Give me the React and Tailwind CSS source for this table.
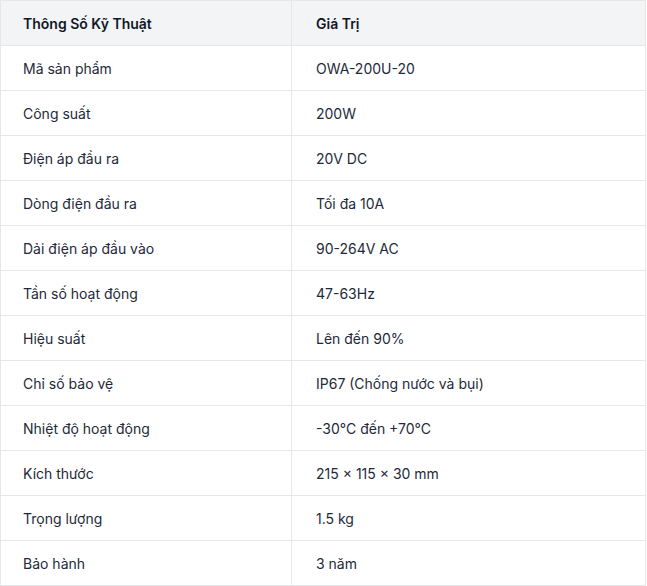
import React from "react";

const rows = [
  ["Mã sản phẩm", "OWA-200U-20"],
  ["Công suất", "200W"],
  ["Điện áp đầu ra", "20V DC"],
  ["Dòng điện đầu ra", "Tối đa 10A"],
  ["Dải điện áp đầu vào", "90-264V AC"],
  ["Tần số hoạt động", "47-63Hz"],
  ["Hiệu suất", "Lên đến 90%"],
  ["Chỉ số bảo vệ", "IP67 (Chống nước và bụi)"],
  ["Nhiệt độ hoạt động", "-30°C đến +70°C"],
  ["Kích thước", "215 × 115 × 30 mm"],
  ["Trọng lượng", "1.5 kg"],
  ["Bảo hành", "3 năm"],
];

export default function App() {
  return (
    <div className="bg-white" style={{ fontFamily: "Inter, 'Noto Sans', sans-serif" }}>
      <table className="w-[646px] border-collapse border border-gray-200 text-sm text-gray-800">
        <thead>
          <tr className="bg-gray-100">
            <th className="w-[291px] border border-gray-200 pl-[22px] pr-6 pt-[13px] pb-[11px] text-left font-semibold text-gray-900">Thông Số Kỹ Thuật</th>
            <th className="border border-gray-200 px-6 pt-[13px] pb-[11px] text-left font-semibold text-gray-900">Giá Trị</th>
          </tr>
        </thead>
        <tbody>
          {rows.map(([a, b]) => (
            <tr key={a}>
              <td className="border border-gray-200 pl-[22px] pr-6 pt-[13px] pb-[11px]">{a}</td>
              <td className="border border-gray-200 px-6 pt-[13px] pb-[11px]">{b}</td>
            </tr>
          ))}
        </tbody>
      </table>
    </div>
  );
}
